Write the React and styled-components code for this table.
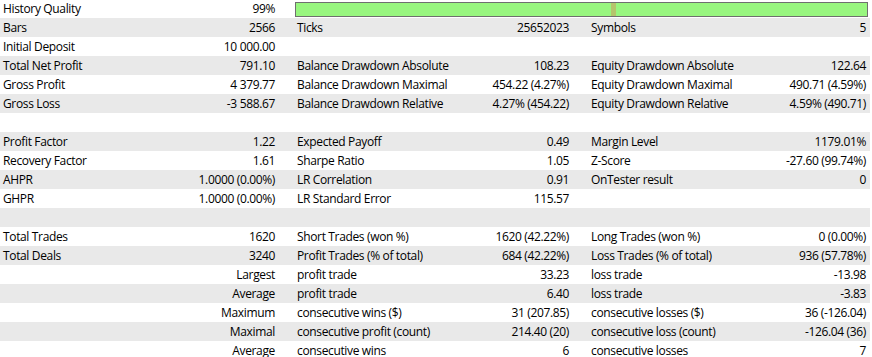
import React from 'react';
import styled, { createGlobalStyle } from 'styled-components';

const GlobalStyle = createGlobalStyle`
  html, body {
    margin: 0;
    padding: 0;
    background: #ffffff;
  }
  body {
    font-family: "Open Sans", "Noto Sans", sans-serif;
    font-size: 12px;
    letter-spacing: -0.35px;
    color: #000;
  }
`

// Report Style
const Report = styled.div`
  width: 870px;
  margin-top: -1px;
`
const Row = styled.div`
  display: grid;
  grid-template-columns: 294px 294px 282px;
  height: 19px;
  line-height: 19px;
  background: ${p => (p.$shade ? '#e9e9e9' : '#ffffff')};
`
const Cell = styled.div`
  display: flex;
  justify-content: space-between;
  padding: 0 ${p => p.$pad}px 0 3px;
  white-space: nowrap;
`
const BarCell = styled.div`
  grid-column: 2 / span 2;
  display: flex;
  align-items: center;
  padding: 0 2px 0 1px;
`
const Bar = styled.div`
  position: relative;
  flex: 1;
  height: 13px;
  margin-top: 1px;
  background: #98f67f;
  border: 1px solid #6f6f6f;
`
const Marker = styled.span`
  position: absolute;
  top: 0;
  bottom: 0;
  left: ${p => p.$at}px;
  width: 5px;
  background: #b5c46c;
`

const rows = [
  [['Bars', '2566'], ['Ticks', '25652023'], ['Symbols', '5']],
  [['Initial Deposit', '10 000.00'], ['', ''], ['', '']],
  [['Total Net Profit', '791.10'], ['Balance Drawdown Absolute', '108.23'], ['Equity Drawdown Absolute', '122.64']],
  [['Gross Profit', '4 379.77'], ['Balance Drawdown Maximal', '454.22 (4.27%)'], ['Equity Drawdown Maximal', '490.71 (4.59%)']],
  [['Gross Loss', '-3 588.67'], ['Balance Drawdown Relative', '4.27% (454.22)'], ['Equity Drawdown Relative', '4.59% (490.71)']],
  null,
  [['Profit Factor', '1.22'], ['Expected Payoff', '0.49'], ['Margin Level', '1179.01%']],
  [['Recovery Factor', '1.61'], ['Sharpe Ratio', '1.05'], ['Z-Score', '-27.60 (99.74%)']],
  [['AHPR', '1.0000 (0.00%)'], ['LR Correlation', '0.91'], ['OnTester result', '0']],
  [['GHPR', '1.0000 (0.00%)'], ['LR Standard Error', '115.57'], ['', '']],
  null,
  [['Total Trades', '1620'], ['Short Trades (won %)', '1620 (42.22%)'], ['Long Trades (won %)', '0 (0.00%)']],
  [['Total Deals', '3240'], ['Profit Trades (% of total)', '684 (42.22%)'], ['Loss Trades (% of total)', '936 (57.78%)']],
  [['', 'Largest'], ['profit trade', '33.23'], ['loss trade', '-13.98']],
  [['', 'Average'], ['profit trade', '6.40'], ['loss trade', '-3.83']],
  [['', 'Maximum'], ['consecutive wins ($)', '31 (207.85)'], ['consecutive losses ($)', '36 (-126.04)']],
  [['', 'Maximal'], ['consecutive profit (count)', '214.40 (20)'], ['consecutive loss (count)', '-126.04 (36)']],
  [['', 'Average'], ['consecutive wins', '6'], ['consecutive losses', '7']],
];

const pads = [19, 19, 4];

const App = () => {
  return (
    <>
      <GlobalStyle />
      <Report>
        <Row>
          <Cell $pad={19}>
            <span>History Quality</span>
            <span>99%</span>
          </Cell>
          <BarCell>
            <Bar>
              <Marker $at={315} />
            </Bar>
          </BarCell>
        </Row>
        {rows.map((row, i) => (
          <Row key={i} $shade={i % 2 === 0}>
            {row
              ? row.map(([label, value], k) => (
                  <Cell key={k} $pad={pads[k]}>
                    <span>{label}</span>
                    <span>{value}</span>
                  </Cell>
                ))
              : null}
          </Row>
        ))}
      </Report>
    </>
  );
};

export default App;
